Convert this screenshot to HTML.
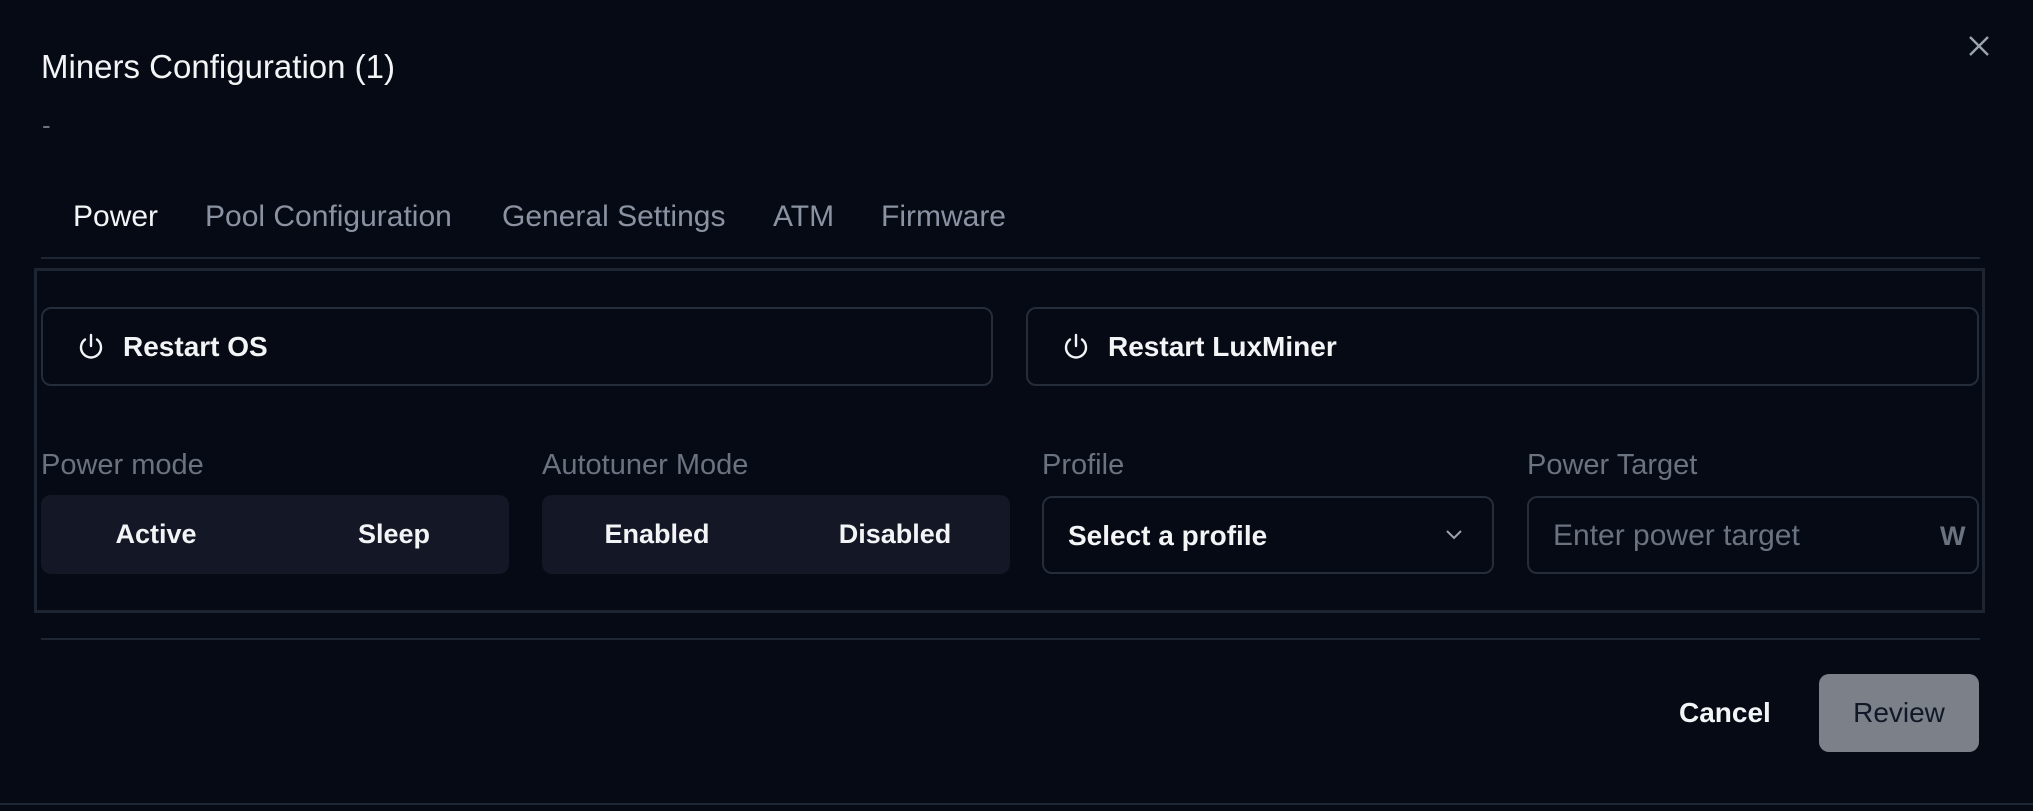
<!DOCTYPE html>
<html><head><style>
*{box-sizing:border-box;margin:0;padding:0}
body{width:2033px;height:811px;background:#050a14;font-family:"Liberation Sans",sans-serif;position:relative;overflow:hidden;color:#f3f4f6}
.a{position:absolute}
.title{left:41px;top:48px;font-size:33px;color:#f3f4f6}
.dash{left:42px;top:110px;font-size:26px;color:#6b7280}
.tab{top:200px;font-size:30px;color:#8b93a3}
.line{background:#1f2633;height:2px}
.panel{left:34px;top:268px;width:1951px;height:345px;border:3px solid #1e2532}
.btn{top:307px;height:79px;border:2px solid #252c3a;border-radius:10px;font-size:28px;font-weight:bold;display:flex;align-items:center;padding-left:34px}
.btn svg{margin-right:18px}
.lbl{top:449px;font-size:29px;color:#6b7280}
.seg{top:495px;height:79px;background:#141826;border-radius:10px;font-size:27px;font-weight:bold}
.seg span{position:absolute;top:24px;transform:translateX(-50%)}
.inp{top:496px;height:78px;border:2px solid #252c3a;border-radius:10px;font-size:27px}
</style></head><body>
<div class="a title">Miners Configuration (1)</div>
<div class="a dash">-</div>
<svg class="a" style="left:1966px;top:33px" width="26" height="26" viewBox="0 0 26 26"><path d="M4 4L22 22M22 4L4 22" stroke="#9ca3af" stroke-width="2.4"/></svg>
<div class="a tab" style="left:73px;color:#f3f4f6">Power</div>
<div class="a tab" style="left:205px">Pool Configuration</div>
<div class="a tab" style="left:502px">General Settings</div>
<div class="a tab" style="left:773px">ATM</div>
<div class="a tab" style="left:881px">Firmware</div>
<div class="a line" style="left:41px;top:257px;width:1939px"></div>
<div class="a panel"></div>
<div class="a btn" style="left:41px;width:952px"><svg width="28" height="30" viewBox="0 0 28 30"><path d="M14 3V14M8 7.5A10 10 0 1 0 20 7.5" fill="none" stroke="#f3f4f6" stroke-width="2.4" stroke-linecap="round"/></svg>Restart OS</div>
<div class="a btn" style="left:1026px;width:953px"><svg width="28" height="30" viewBox="0 0 28 30"><path d="M14 3V14M8 7.5A10 10 0 1 0 20 7.5" fill="none" stroke="#f3f4f6" stroke-width="2.4" stroke-linecap="round"/></svg>Restart LuxMiner</div>
<div class="a lbl" style="left:41px">Power mode</div>
<div class="a lbl" style="left:542px">Autotuner Mode</div>
<div class="a lbl" style="left:1042px">Profile</div>
<div class="a lbl" style="left:1527px">Power Target</div>
<div class="a seg" style="left:41px;width:468px"><span style="left:115px">Active</span><span style="left:353px">Sleep</span></div>
<div class="a seg" style="left:542px;width:468px"><span style="left:115px">Enabled</span><span style="left:353px">Disabled</span></div>
<div class="a inp" style="left:1042px;width:452px"><span class="a" style="left:24px;top:22px;font-weight:bold;font-size:28px">Select a profile</span><svg class="a" style="left:400px;top:30px" width="20" height="14" viewBox="0 0 20 14"><path d="M3 3L10 10L17 3" fill="none" stroke="#9ca3af" stroke-width="2"/></svg></div>
<div class="a inp" style="left:1527px;width:452px;color:#6b7280"><span class="a" style="left:24px;top:21px;font-size:30px">Enter power target</span><span class="a" style="left:411px;top:23px;font-weight:bold">W</span></div>
<div class="a line" style="left:41px;top:638px;width:1939px"></div>
<div class="a" style="left:1679px;top:697px;font-size:28px;font-weight:bold">Cancel</div>
<div class="a" style="left:1819px;top:674px;width:160px;height:78px;background:#7b8089;border-radius:10px;color:#111827;font-size:28px;text-align:center;line-height:78px">Review</div>
<div class="a line" style="left:0;top:803px;width:2033px"></div>
</body></html>
